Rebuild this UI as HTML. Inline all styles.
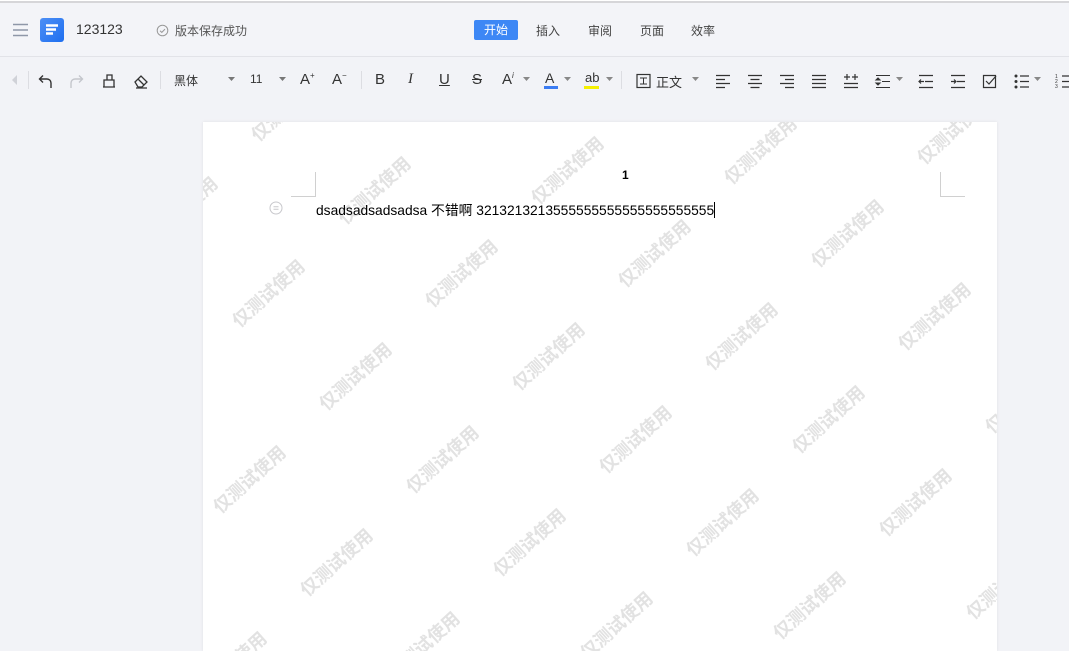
<!DOCTYPE html>
<html><head><meta charset="utf-8">
<style>
*{margin:0;padding:0;box-sizing:border-box}
html,body{width:1069px;height:651px;overflow:hidden}
body{background:#f2f3f7;font-family:"Liberation Sans","Noto Sans CJK SC",sans-serif;position:relative;color:#333}
.topline{position:absolute;left:0;top:0;width:1069px;height:3px;background:#fff;border-bottom:2px solid #d6d6d9}
.hdr{position:absolute;left:0;top:3px;width:1069px;height:54px;border-bottom:1px solid #e2e3e8;background:#f3f4f8}
.abs{position:absolute}
.tab{position:absolute;top:21px;font-size:12px;color:#444;height:20px;line-height:20px}
.ic{position:absolute;top:72px}
.page{position:absolute;left:203px;top:122px;width:794px;height:529px;background:#fff;box-shadow:0 0 3px rgba(0,0,0,.08);overflow:hidden}
.wm{position:absolute;font-size:18px;font-weight:bold;color:#e2e2e2;white-space:nowrap;transform:translate(-50%,-50%) rotate(-42deg);font-family:"Noto Sans CJK SC",sans-serif}
.sep{position:absolute;top:71px;width:1px;height:18px;background:#dcdde2}
</style></head><body>
<div class="topline"></div>
<div class="hdr"></div>
<svg class="abs" style="left:13px;top:23px" width="16" height="14"><path d="M0 1.5h15M0 7h15M0 12.5h15" stroke="#8e97a8" stroke-width="1.6"/></svg>
<div class="abs" style="left:40px;top:18px;width:24px;height:24px;border-radius:3px;background:linear-gradient(135deg,#4d8ff5,#1e6ff0)"></div>
<svg class="abs" style="left:40px;top:18px" width="24" height="24"><path d="M6 7.5h12M6 11.5h10M6 15.5h7" stroke="#fff" stroke-width="2.4"/></svg>
<div class="abs" style="left:76px;top:21px;font-size:14px;color:#333">123123</div>
<svg class="abs" style="left:156px;top:24px" width="13" height="13"><circle cx="6.5" cy="6.5" r="5.3" fill="none" stroke="#999" stroke-width="1"/><path d="M4 6.7l1.8 1.7 3.2-3.3" fill="none" stroke="#999" stroke-width="1"/></svg>
<div class="abs" style="left:175px;top:22px;font-size:12px;color:#555">版本保存成功</div>
<div class="abs" style="left:474px;top:20px;width:44px;height:20px;background:#3d87f5;border-radius:2px;color:#fff;font-size:12px;text-align:center;line-height:20px">开始</div>
<div class="tab" style="left:536px">插入</div>
<div class="tab" style="left:588px">审阅</div>
<div class="tab" style="left:640px">页面</div>
<div class="tab" style="left:691px">效率</div>
<svg class="abs" style="left:11px;top:75px" width="8" height="10"><path d="M6 0L1 5l5 5z" fill="#d0d2d8"/></svg>
<div class="sep" style="left:28px"></div>
<svg class="ic" style="left:36px" width="18" height="18"><path d="M4 7h7a4 4 0 0 1 4 4v5M7 3.5L3.5 7 7 10.5" fill="none" stroke="#333" stroke-width="1.4"/></svg>
<svg class="ic" style="left:68px" width="18" height="18"><path d="M14 7H7a4 4 0 0 0-4 4v5M11 3.5L14.5 7 11 10.5" fill="none" stroke="#c4c6cc" stroke-width="1.4"/></svg>
<svg class="ic" style="left:100px" width="18" height="18"><path d="M3 15h12M4 15V8h10v7M7 8V3h5v5" fill="none" stroke="#333" stroke-width="1.3"/></svg>
<svg class="ic" style="left:132px" width="18" height="18"><path d="M3 10l6-6 6 6-5 5H6z M6 7l6 6M4 16h11" fill="none" stroke="#333" stroke-width="1.3"/></svg>
<div class="sep" style="left:160px"></div>
<div class="abs" style="left:174px;top:72px;font-size:12px;color:#333">黑体</div>
<svg class="abs" style="left:228px;top:77px" width="8" height="5"><path d="M0 0h7L3.5 4z" fill="#777"/></svg>
<div class="abs" style="left:250px;top:72px;font-size:12px;color:#333">11</div>
<svg class="abs" style="left:279px;top:77px" width="8" height="5"><path d="M0 0h7L3.5 4z" fill="#777"/></svg>
<div class="abs" style="left:300px;top:71px;font-size:15px;color:#333">A<sup style="font-size:8px">+</sup></div>
<div class="abs" style="left:332px;top:71px;font-size:15px;color:#333">A<sup style="font-size:8px">−</sup></div>
<div class="sep" style="left:361px"></div>
<div class="abs" style="left:375px;top:71px;font-size:15px;color:#333">B</div>
<div class="abs" style="left:408px;top:71px;font-size:15px;color:#333;font-family:'Liberation Serif';font-style:italic">I</div>
<div class="abs" style="left:439px;top:71px;font-size:15px;color:#333;text-decoration:underline">U</div>
<div class="abs" style="left:472px;top:71px;font-size:15px;color:#333;text-decoration:line-through">S</div>
<div class="abs" style="left:502px;top:71px;font-size:15px;color:#333">A<sup style="font-size:8px;font-style:italic">i</sup></div>
<svg class="abs" style="left:523px;top:77px" width="8" height="5"><path d="M0 0h7L3.5 4z" fill="#888"/></svg>
<div class="abs" style="left:545px;top:70px;font-size:14px;color:#333">A</div>
<div class="abs" style="left:544px;top:86px;width:14px;height:3px;background:#3b7cf2"></div>
<svg class="abs" style="left:564px;top:77px" width="8" height="5"><path d="M0 0h7L3.5 4z" fill="#888"/></svg>
<div class="abs" style="left:585px;top:70px;font-size:13px;color:#333">ab</div>
<div class="abs" style="left:584px;top:86px;width:15px;height:3px;background:#f5f000"></div>
<svg class="abs" style="left:606px;top:77px" width="8" height="5"><path d="M0 0h7L3.5 4z" fill="#888"/></svg>
<div class="sep" style="left:621px"></div>
<svg class="ic" style="left:635px" width="18" height="18"><rect x="2" y="2.5" width="13" height="13" fill="none" stroke="#333" stroke-width="1.2"/><path d="M5 6h7M8.5 6v6M5 12h7" stroke="#333" stroke-width="1"/></svg>
<div class="abs" style="left:656px;top:72px;font-size:13px;color:#333">正文</div>
<svg class="abs" style="left:692px;top:77px" width="8" height="5"><path d="M0 0h7L3.5 4z" fill="#888"/></svg>
<svg class="ic" style="left:714px" width="18" height="18"><path d="M2 3.5h14M2 7.5h9M2 11.5h14M2 15.5h9" stroke="#333" stroke-width="1.2"/></svg>
<svg class="ic" style="left:746px" width="18" height="18"><path d="M2 3.5h14M4.5 7.5h9M2 11.5h14M4.5 15.5h9" stroke="#333" stroke-width="1.2"/></svg>
<svg class="ic" style="left:778px" width="18" height="18"><path d="M2 3.5h14M7 7.5h9M2 11.5h14M7 15.5h9" stroke="#333" stroke-width="1.2"/></svg>
<svg class="ic" style="left:810px" width="18" height="18"><path d="M2 3.5h14M2 7.5h14M2 11.5h14M2 15.5h14" stroke="#333" stroke-width="1.2"/></svg>
<svg class="ic" style="left:842px" width="18" height="18"><path d="M2 11.5h14M2 15.5h14M5 2v6M2 5h6M13 2v6M10 5h6" stroke="#333" stroke-width="1.2"/></svg>
<svg class="ic" style="left:874px" width="18" height="18"><path d="M2 3.5h14M8 9.5h8M2 15.5h14M4 6l-2 2h4zM4 13l-2-2h4z" stroke="#333" stroke-width="1.1" fill="#333"/></svg>
<svg class="abs" style="left:896px;top:77px" width="8" height="5"><path d="M0 0h7L3.5 4z" fill="#888"/></svg>
<svg class="ic" style="left:917px" width="18" height="18"><path d="M2 3.5h14M8 9.5h8M2 15.5h14M2 9.5h5M4 7.5l-2 2 2 2" stroke="#333" stroke-width="1.2" fill="none"/></svg>
<svg class="ic" style="left:949px" width="18" height="18"><path d="M2 3.5h14M8 9.5h8M2 15.5h14M2 9.5h5M5 7.5l2 2-2 2" stroke="#333" stroke-width="1.2" fill="none"/></svg>
<svg class="ic" style="left:981px" width="18" height="18"><path d="M2.5 3.5h12v12h-12z" stroke="#333" stroke-width="1.2" fill="none"/><path d="M5 9l3 3 7-8" stroke="#333" stroke-width="1.2" fill="none"/></svg>
<svg class="ic" style="left:1013px" width="18" height="18"><circle cx="3" cy="4" r="1.5" fill="#333"/><circle cx="3" cy="9.5" r="1.5" fill="#333"/><circle cx="3" cy="15" r="1.5" fill="#333"/><path d="M7 4h9M7 9.5h9M7 15h9" stroke="#333" stroke-width="1.2"/></svg>
<svg class="abs" style="left:1034px;top:77px" width="8" height="5"><path d="M0 0h7L3.5 4z" fill="#888"/></svg>
<svg class="ic" style="left:1055px" width="14" height="18"><path d="M7 4h9M7 9.5h9M7 15h9" stroke="#333" stroke-width="1.2"/><text x="0" y="6" font-size="5" fill="#333">1</text><text x="0" y="11" font-size="5" fill="#333">2</text><text x="0" y="16" font-size="5" fill="#333">3</text></svg>
<div class="page" id="pg"></div>
<div class="abs" style="left:622px;top:168px;font-size:12px;font-weight:bold;color:#000">1</div>
<div class="abs" style="left:291px;top:172px;width:25px;height:25px;border-right:1px solid #d0d0d0;border-bottom:1px solid #d0d0d0"></div>
<div class="abs" style="left:940px;top:172px;width:25px;height:25px;border-left:1px solid #d0d0d0;border-bottom:1px solid #d0d0d0"></div>
<svg class="abs" style="left:269px;top:201px" width="14" height="14"><circle cx="7" cy="7" r="6" fill="none" stroke="#c8c8cc"/><path d="M4.5 5.8h5M4.5 8.2h5" stroke="#c8c8cc"/></svg>
<div class="abs" style="left:316px;top:199px;font-size:13.8px;color:#000;white-space:nowrap">dsadsadsadsadsa 不错啊 3213213213555555555555555555555<span style="display:inline-block;width:1px;height:16px;background:#000;vertical-align:-3px"></span></div>
<script>
var pg=document.getElementById('pg'),h='';
for(var i=-4;i<8;i++)for(var j=-6;j<8;j++){var x=268+193*i+87*j-203,y=293-20*i+83*j-122;
if(x>-80&&x<880&&y>-80&&y<620)h+='<div class="wm" style="left:'+x+'px;top:'+y+'px">仅测试使用</div>';}
pg.innerHTML=h;
</script>
</body></html>
